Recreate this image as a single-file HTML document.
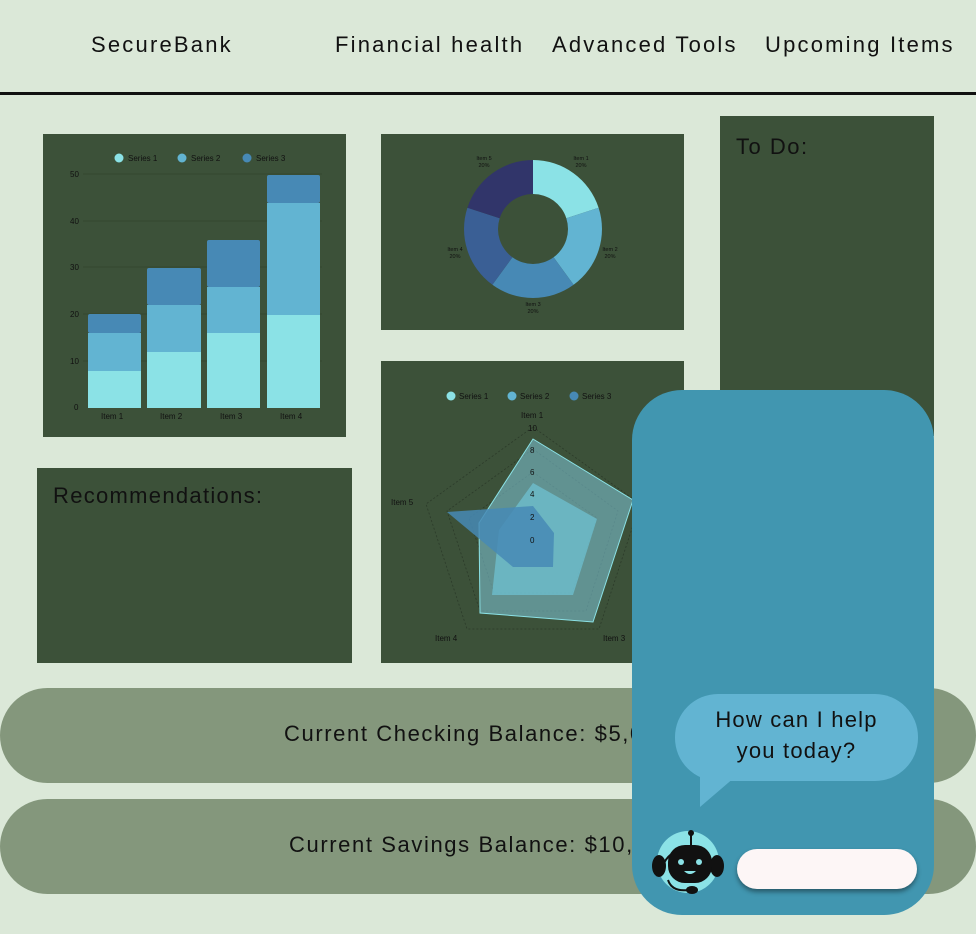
<!DOCTYPE html>
<html><head><style>
*{margin:0;padding:0;box-sizing:border-box}
body{width:976px;height:934px;background:#dbe8d8;position:relative;overflow:hidden;font-family:"Liberation Sans",sans-serif;color:#111}
.a{position:absolute}
.panel{position:absolute;background:#3c5139}
.nav{position:absolute;top:32px;font-size:22px;letter-spacing:2.2px}
.pill{position:absolute;left:0;width:976px;background:#84977c;border-radius:48px;font-size:22px}
.pill span{position:absolute;letter-spacing:1.6px;white-space:nowrap}
</style></head><body>
<div class="nav" style="left:91px">SecureBank</div>
<div class="nav" style="left:335px">Financial health</div>
<div class="nav" style="left:552px">Advanced Tools</div>
<div class="nav" style="left:765px">Upcoming Items</div>
<div class="a" style="left:0;top:92px;width:976px;height:3px;background:#111"></div>

<!-- Bar chart -->
<div class="panel" style="left:43px;top:134px;width:303px;height:303px"></div>
<svg class="a" style="left:0;top:0" width="976" height="934">
<g font-family="Liberation Sans" font-size="8" fill="#111">
<circle cx="119" cy="158" r="4.5" fill="#8be2e6"/><text x="128" y="161">Series 1</text>
<circle cx="182" cy="158" r="4.5" fill="#62b4d2"/><text x="191" y="161">Series 2</text>
<circle cx="247" cy="158" r="4.5" fill="#4789b5"/><text x="256" y="161">Series 3</text>
<g stroke="#334630" stroke-width="1"><line x1="83" y1="174" x2="322" y2="174"/><line x1="83" y1="221" x2="322" y2="221"/><line x1="83" y1="267" x2="322" y2="267"/><line x1="83" y1="314" x2="322" y2="314"/><line x1="83" y1="361" x2="322" y2="361"/></g>
<text x="70" y="177">50</text><text x="70" y="224">40</text><text x="70" y="270">30</text><text x="70" y="317">20</text><text x="70" y="364">10</text><text x="74" y="410">0</text>
<rect x="88" y="314" width="53" height="19" fill="#4789b5" rx="2"/><rect x="88" y="333" width="53" height="38" fill="#62b4d2"/><rect x="88" y="371" width="53" height="37" fill="#8be2e6"/>
<rect x="147" y="268" width="54" height="37" fill="#4789b5" rx="2"/><rect x="147" y="305" width="54" height="47" fill="#62b4d2"/><rect x="147" y="352" width="54" height="56" fill="#8be2e6"/>
<rect x="207" y="240" width="53" height="47" fill="#4789b5" rx="2"/><rect x="207" y="287" width="53" height="46" fill="#62b4d2"/><rect x="207" y="333" width="53" height="75" fill="#8be2e6"/>
<rect x="267" y="175" width="53" height="28" fill="#4789b5" rx="2"/><rect x="267" y="203" width="53" height="112" fill="#62b4d2"/><rect x="267" y="315" width="53" height="93" fill="#8be2e6"/>
<text x="101" y="419">Item 1</text><text x="160" y="419">Item 2</text><text x="220" y="419">Item 3</text><text x="280" y="419">Item 4</text>
</g>
</svg>

<!-- Donut -->
<div class="panel" style="left:381px;top:134px;width:303px;height:196px"></div>
<svg class="a" style="left:381px;top:134px" width="303" height="196">
<g transform="translate(152,95)">
<path d="M0,-69 A69,69 0 0 1 65.6,-21.3 L33.3,-10.8 A35,35 0 0 0 0,-35Z" fill="#8be2e6"/>
<path d="M65.6,-21.3 A69,69 0 0 1 40.6,55.8 L20.6,28.3 A35,35 0 0 0 33.3,-10.8Z" fill="#62b4d2"/>
<path d="M40.6,55.8 A69,69 0 0 1 -40.6,55.8 L-20.6,28.3 A35,35 0 0 0 20.6,28.3Z" fill="#4789b5"/>
<path d="M-40.6,55.8 A69,69 0 0 1 -65.6,-21.3 L-33.3,-10.8 A35,35 0 0 0 -20.6,28.3Z" fill="#3a5f95"/>
<path d="M-65.6,-21.3 A69,69 0 0 1 0,-69 L0,-35 A35,35 0 0 0 -33.3,-10.8Z" fill="#31356a"/>
</g>
<g font-family="Liberation Sans" font-size="5.5" fill="#111" text-anchor="middle">
<text x="200" y="26">Item 1</text><text x="200" y="33">20%</text>
<text x="229" y="117">Item 2</text><text x="229" y="124">20%</text>
<text x="152" y="172">Item 3</text><text x="152" y="179">20%</text>
<text x="74" y="117">Item 4</text><text x="74" y="124">20%</text>
<text x="103" y="26">Item 5</text><text x="103" y="33">20%</text>
</g>
</svg>

<!-- To do -->
<div class="panel" style="left:720px;top:116px;width:214px;height:320px"></div>
<div class="a" style="left:736px;top:134px;font-size:22px;letter-spacing:1.5px">To Do:</div>

<!-- Recommendations -->
<div class="panel" style="left:37px;top:468px;width:315px;height:195px"></div>
<div class="a" style="left:53px;top:483px;font-size:22px;letter-spacing:1.3px">Recommendations:</div>

<!-- Radar -->
<div class="panel" style="left:381px;top:361px;width:303px;height:302px"></div>
<svg class="a" style="left:0;top:0" width="976" height="934">
<g font-family="Liberation Sans" font-size="8" fill="#111">
<circle cx="451" cy="396" r="4.5" fill="#8be2e6"/><text x="459" y="399">Series 1</text>
<circle cx="512" cy="396" r="4.5" fill="#62b4d2"/><text x="520" y="399">Series 2</text>
<circle cx="574" cy="396" r="4.5" fill="#4789b5"/><text x="582" y="399">Series 3</text>
<g fill="none" stroke="#2c3b2a" stroke-dasharray="2,2" stroke-width="0.8">
<polygon points="533,427 640,504 599,629 467,629 426,504"/>
<polygon points="533,449 618,511 586,611 480,611 447,511"/>
<polygon points="533,472 597,518 572,593 494,593 469,518"/>
</g>
<polygon points="533,439 633,500 593,622 480,613 479,523" fill="#7fc8da" fill-opacity="0.55" stroke="#8be2e6" stroke-width="1"/>
<polygon points="533,483 597,519 573,595 492,595 499,530" fill="#6fc4d6" fill-opacity="0.7"/>
<polygon points="533,506 554,533 553,567 513,567 447,512" fill="#4789b5" fill-opacity="0.85"/>
<text x="521" y="418">Item 1</text>
<text x="391" y="505">Item 5</text><text x="435" y="641">Item 4</text><text x="603" y="641">Item 3</text>
<text x="528" y="431">10</text><text x="530" y="453">8</text><text x="530" y="475">6</text><text x="530" y="497">4</text><text x="530" y="520">2</text><text x="530" y="543">0</text>
</g>
</svg>

<!-- Pills -->
<div class="pill" style="top:688px;height:95px"><span style="left:284px;top:33px">Current Checking Balance: $5,000.00</span></div>
<div class="pill" style="top:799px;height:95px"><span style="left:289px;top:33px">Current Savings Balance: $10,000.00</span></div>

<!-- Chat -->
<div class="a" style="left:632px;top:390px;width:302px;height:525px;background:#4196b0;border-radius:50px"></div>
<svg class="a" style="left:632px;top:680px" width="302" height="240">
<rect x="43" y="14" width="243" height="87" rx="43" fill="#62b4d2"/>
<polygon points="68,80 68,127 103,97" fill="#62b4d2"/>
<circle cx="56" cy="182" r="31" fill="#8be2e6"/>
<path d="M30,188 A27,27 0 0 1 82,188" fill="none" stroke="#111" stroke-width="2"/>
<ellipse cx="27" cy="186" rx="7" ry="11" fill="#111"/><ellipse cx="85" cy="186" rx="7" ry="11" fill="#111"/>
<line x1="59" y1="154" x2="59" y2="166" stroke="#111" stroke-width="2"/><circle cx="59" cy="153" r="3" fill="#111"/>
<rect x="36" y="165" width="44" height="38" rx="17" fill="#111"/>
<circle cx="49" cy="182" r="3" fill="#8be2e6"/><circle cx="67" cy="182" r="3" fill="#8be2e6"/>
<path d="M52,191 Q58,197 64,191" fill="#8be2e6"/>
<path d="M36,200 Q40,212 56,210" fill="none" stroke="#111" stroke-width="2"/><ellipse cx="60" cy="210" rx="6" ry="4" fill="#111"/>
</svg>
<div class="a" style="left:675px;top:704px;width:243px;text-align:center;font-size:22px;line-height:31px;letter-spacing:1.2px">How can I help<br>you today?</div>
<div class="a" style="left:737px;top:849px;width:180px;height:40px;background:#fdf6f6;border-radius:20px;box-shadow:0 3px 5px rgba(0,0,0,0.4)"></div>
</body></html>
